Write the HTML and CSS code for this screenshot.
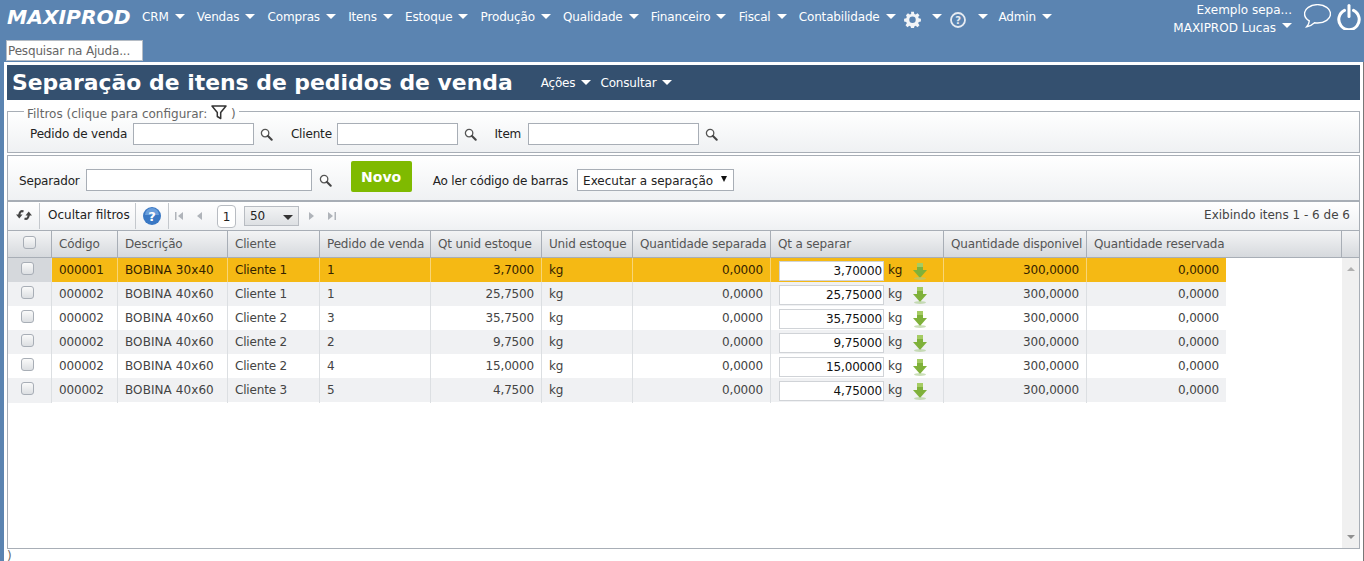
FILE: index.html
```html
<!DOCTYPE html>
<html lang="pt-BR">
<head>
<meta charset="utf-8">
<title>Separação de itens de pedidos de venda</title>
<link rel="stylesheet" href="styles.css">
</head>
<body>
<svg class="defs" width="0" height="0">
  <symbol id="lupa" viewBox="0 0 14 14"><circle cx="5.5" cy="5.5" r="4" fill="#fff" stroke="#555" stroke-width="1.4"/><path d="M8.6 8.6L12.6 12.6" stroke="#444" stroke-width="2.2" stroke-linecap="round"/></symbol>
  <symbol id="seta" viewBox="0 0 16 18"><path d="M5 1h6v7h4l-7 8-7-8h4z" fill="#7fb13a"/><path d="M5 1h6v4H5z" fill="#a5cc63"/><ellipse cx="8" cy="16.5" rx="6" ry="1.4" fill="#a9c98a" opacity=".6"/></symbol>
</svg>
<header class="topo">
  <div class="topo-linha">
    <span class="logo">MAXIPROD</span>
    <nav class="menu">
      <a class="mi">CRM<i class="car"></i></a>
      <a class="mi">Vendas<i class="car"></i></a>
      <a class="mi">Compras<i class="car"></i></a>
      <a class="mi">Itens<i class="car"></i></a>
      <a class="mi">Estoque<i class="car"></i></a>
      <a class="mi">Produção<i class="car"></i></a>
      <a class="mi">Qualidade<i class="car"></i></a>
      <a class="mi">Financeiro<i class="car"></i></a>
      <a class="mi">Fiscal<i class="car"></i></a>
      <a class="mi mi-cont">Contabilidade<i class="car"></i></a>
      <a class="mi mi-ic"><svg class="ic-gear" viewBox="0 0 18 18"><path d="M7.500.8h3l.4 2.300 1.500.6 1.900-1.400 2.100 2.100-1.400 1.900.6 1.500 2.300.4v3l-2.300.4-.6 1.500 1.400 1.900-2.100 2.100-1.900-1.400-1.500.6-.4 2.300h-3l-.4-2.300-1.500-.6-1.900 1.400-2.100-2.100 1.400-1.900-.6-1.500-2.300-.4v-3l2.300-.4.6-1.500L2.100 4.400l2.100-2.100 1.900 1.400 1.500-.6z" fill="#f2f4f7"/><circle cx="9" cy="9.300" r="3.400" fill="#5b84b1"/></svg><i class="car"></i></a>
      <a class="mi mi-aj"><svg class="ic-help" viewBox="0 0 16 16"><circle cx="8" cy="8" r="7" fill="none" stroke="#e6ebf2" stroke-width="1.800"/><text x="8" y="11.500" class="ic-help-t">?</text></svg><i class="car"></i></a>
      <a class="mi">Admin<i class="car"></i></a>
    </nav>
    <div class="usuario">
      <div class="usu-txt">
        <span>Exemplo sepa...</span>
        <span class="usu-nome">MAXIPROD Lucas<i class="car"></i></span>
      </div>
      <svg class="ic-chat" viewBox="1 1 25 22"><path d="M13.500 1.500C6.800 1.500 1.500 5.300 1.500 10c0 2.700 1.700 5 4.400 6.600-.2 2-1.200 4-2.400 5.400 3-.5 5.500-2 7.300-3.700.9.200 1.800.2 2.700.2 6.700 0 12-3.800 12-8.500S20.200 1.500 13.500 1.500z" fill="none" stroke="#fff" stroke-width="1.300"/></svg>
      <svg class="ic-power" viewBox="0 0 24 26"><path d="M7.500 6.300a10.200 10.200 0 1 0 9 0" fill="none" stroke="#fff" stroke-width="3" stroke-linecap="round"/><path d="M12 1.500v11" stroke="#fff" stroke-width="3" stroke-linecap="round"/></svg>
    </div>
  </div>
  <input class="ajuda" type="text" placeholder="Pesquisar na Ajuda...">
</header>
<main class="principal">
  <div class="titulo">
    <h1>Separação de itens de pedidos de venda</h1>
    <a class="tm">Ações<i class="car"></i></a>
    <a class="tm">Consultar<i class="car"></i></a>
  </div>
  <fieldset class="filtros">
    <legend>Filtros (clique para configurar: <svg class="ic-funil" viewBox="0 0 16 15"><path d="M1 1h14L9.700 7.500V13.500L6.300 11.500V7.500z" fill="none" stroke="#333" stroke-width="1.500" stroke-linejoin="round"/></svg> )</legend>
    <label class="rot">Pedido de venda</label><input class="campo c1" type="text"><svg class="lupa"><use href="#lupa"/></svg>
    <label class="rot r2">Cliente</label><input class="campo c2" type="text"><svg class="lupa"><use href="#lupa"/></svg>
    <label class="rot r3">Item</label><input class="campo c3" type="text"><svg class="lupa"><use href="#lupa"/></svg>
  </fieldset>
  <section class="form">
    <label class="rot rot-f">Separador</label><input class="campo c4" type="text"><svg class="lupa"><use href="#lupa"/></svg>
    <button class="novo" type="button">Novo</button>
    <label class="rot rot-f">Ao ler código de barras</label>
    <div class="sel"><span>Executar a separação</span><i class="car-p"></i></div>
  </section>
  <section class="grade">
    <div class="barra">
      <span class="b-cel b-ref"><svg class="ic-ref" viewBox="0 0 16 12"><path d="M7.500 2.500C5 1.500 3.500 3 3.300 6" fill="none" stroke="#444" stroke-width="2.200"/><path d="M0 5.500h6.500L3.300 9.500z" fill="#444"/><path d="M8.500 9.500c2.500 1 4-.5 4.200-3.500" fill="none" stroke="#444" stroke-width="2.200"/><path d="M9.500 6.500h6.500L12.700 2.500z" fill="#444"/></svg></span>
      <span class="b-cel b-oc">Ocultar filtros</span>
      <span class="b-cel b-aj"><svg class="ic-aj" viewBox="0 0 18 18"><circle cx="9" cy="9" r="9" fill="#3a78c4"/><path d="M2 8a7 7 0 0 1 14 0z" fill="#6a9edb"/><text x="9" y="13.500" class="ic-aj-t">?</text></svg></span>
      <span class="pg"><svg class="pa" viewBox="0 0 8 10"><path d="M0 1h1.500v8H0zM8 1v8L3 5z"/></svg></span>
      <span class="pg"><svg class="pa" viewBox="0 0 8 10"><path d="M7 1v8L2 5z"/></svg></span>
      <span class="pg-num">1</span>
      <span class="pg-sel">50<i class="car-d"></i></span>
      <span class="pg pg-d"><svg class="pa" viewBox="0 0 8 10"><path d="M1 1v8l5-4z"/></svg></span>
      <span class="pg"><svg class="pa" viewBox="0 0 8 10"><path d="M0 1v8l5-4zM6.500 1H8v8H6.500z"/></svg></span>
      <span class="exibindo">Exibindo itens 1 - 6 de 6</span>
    </div>
    <div class="cab">
      <div class="ch ch-chk"><i class="chk"></i></div>
      <div class="ch">Código</div>
      <div class="ch">Descrição</div>
      <div class="ch">Cliente</div>
      <div class="ch">Pedido de venda</div>
      <div class="ch">Qt unid estoque</div>
      <div class="ch">Unid estoque</div>
      <div class="ch">Quantidade separada</div>
      <div class="ch">Qt a separar</div>
      <div class="ch">Quantidade disponivel</div>
      <div class="ch ch-res">Quantidade reservada</div>
      <div class="ch ch-fim"></div>
    </div>
    <div class="corpo">
      <div class="linhas">
        <div class="lin sel-lin"><div class="td td-chk"><i class="chk"></i></div><div class="td">000001</div><div class="td">BOBINA 30x40</div><div class="td">Cliente 1</div><div class="td">1</div><div class="td dir">3,7000</div><div class="td">kg</div><div class="td dir">0,0000</div><div class="td td-qt"><input class="qt" value="3,70000"><span>kg</span><svg class="seta"><use href="#seta"/></svg></div><div class="td dir">300,0000</div><div class="td dir">0,0000</div></div>
        <div class="lin alt"><div class="td td-chk"><i class="chk"></i></div><div class="td">000002</div><div class="td">BOBINA 40x60</div><div class="td">Cliente 1</div><div class="td">1</div><div class="td dir">25,7500</div><div class="td">kg</div><div class="td dir">0,0000</div><div class="td td-qt"><input class="qt" value="25,75000"><span>kg</span><svg class="seta"><use href="#seta"/></svg></div><div class="td dir">300,0000</div><div class="td dir">0,0000</div></div>
        <div class="lin"><div class="td td-chk"><i class="chk"></i></div><div class="td">000002</div><div class="td">BOBINA 40x60</div><div class="td">Cliente 2</div><div class="td">3</div><div class="td dir">35,7500</div><div class="td">kg</div><div class="td dir">0,0000</div><div class="td td-qt"><input class="qt" value="35,75000"><span>kg</span><svg class="seta"><use href="#seta"/></svg></div><div class="td dir">300,0000</div><div class="td dir">0,0000</div></div>
        <div class="lin alt"><div class="td td-chk"><i class="chk"></i></div><div class="td">000002</div><div class="td">BOBINA 40x60</div><div class="td">Cliente 2</div><div class="td">2</div><div class="td dir">9,7500</div><div class="td">kg</div><div class="td dir">0,0000</div><div class="td td-qt"><input class="qt" value="9,75000"><span>kg</span><svg class="seta"><use href="#seta"/></svg></div><div class="td dir">300,0000</div><div class="td dir">0,0000</div></div>
        <div class="lin"><div class="td td-chk"><i class="chk"></i></div><div class="td">000002</div><div class="td">BOBINA 40x60</div><div class="td">Cliente 2</div><div class="td">4</div><div class="td dir">15,0000</div><div class="td">kg</div><div class="td dir">0,0000</div><div class="td td-qt"><input class="qt" value="15,00000"><span>kg</span><svg class="seta"><use href="#seta"/></svg></div><div class="td dir">300,0000</div><div class="td dir">0,0000</div></div>
        <div class="lin alt"><div class="td td-chk"><i class="chk"></i></div><div class="td">000002</div><div class="td">BOBINA 40x60</div><div class="td">Cliente 3</div><div class="td">5</div><div class="td dir">4,7500</div><div class="td">kg</div><div class="td dir">0,0000</div><div class="td td-qt"><input class="qt" value="4,75000"><span>kg</span><svg class="seta"><use href="#seta"/></svg></div><div class="td dir">300,0000</div><div class="td dir">0,0000</div></div>
      </div>
      <div class="rolagem"><i class="rl-c"></i><i class="rl-b"></i></div>
    </div>
  </section>
  <div class="resto">)</div>
</main>
</body>
</html>
```
FILE: styles.css
```css
* { box-sizing: border-box; }
html, body { height: 100%; }
body {
  margin: 0;
  height: 561px;
  overflow: hidden;
  background: #5b84b1;
  font-family: "DejaVu Sans", sans-serif;
  font-size: 12px;
  letter-spacing: -0.17px;
  color: #222;
}
.defs { display: block; height: 0; }
.topo { height: 62px; }
.topo-linha { display: flex; height: 40px; align-items: flex-start; padding-left: 7px; }
.logo {
  width: 135px;
  margin-top: 6px;
  font-weight: bold;
  font-style: italic;
  font-size: 20.3px;
  letter-spacing: 0;
  line-height: 23px;
  color: #fff;
}
.menu { display: flex; margin-top: 10px; color: #fff; line-height: 15px; }
.mi { display: flex; align-items: flex-start; margin-right: 12.25px; }
.mi-cont, .mi-ic { margin-right: 8px; }
.mi-aj { margin-right: 11px; }
.car {
  display: inline-block;
  width: 0;
  height: 0;
  margin: 4px 0 0 6px;
  border-left: 5px solid transparent;
  border-right: 5px solid transparent;
  border-top: 5px solid #fff;
}
.ic-gear { width: 17px; height: 17px; margin: 1px 5px 0 0; }
.ic-help { width: 16px; height: 16px; margin: 2px 6px 0 0; }
.ic-help-t { font: bold 10px "DejaVu Sans", sans-serif; fill: #e6ebf2; text-anchor: middle; }
.usuario { display: flex; margin-left: auto; padding-right: 3px; color: #fff; letter-spacing: 0; }
.usu-txt { display: flex; flex-direction: column; align-items: flex-end; margin-top: 1px; line-height: 18px; }
.usu-nome { display: flex; }
.ic-chat { width: 27px; height: 24px; margin: 4px 6px 0 12px; }
.ic-power { width: 24px; height: 26px; margin-top: 4px; }
.ajuda {
  display: block;
  width: 137px;
  height: 21px;
  margin-left: 6px;
  padding: 0 1px;
  border: 1px solid #b5bcc5;
  background: #fff;
  font: 12px "DejaVu Sans", sans-serif;
  letter-spacing: -0.17px;
}
.ajuda::placeholder { color: #666; opacity: 1; }
.principal {
  height: 499px;
  margin: 0 0 0 4px;
  padding: 3px 3px 0 3px;
  background: #fff;
  border-right: 1px solid #777;
}
.titulo {
  display: flex;
  align-items: center;
  height: 35px;
  padding-left: 5px;
  background: #34506f;
  color: #fff;
}
.titulo h1 {
  margin: 0 28px 0 0;
  font-size: 21.9px;
  font-weight: bold;
  letter-spacing: 0;
  line-height: 35px;
}
.tm { display: flex; margin-right: 9px; }
.filtros {
  display: block;
  height: 48px;
  margin: 5px 0 2px;
  padding: 5px 0 0 22px;
  border: 1px solid #a8aeb6;
  background: linear-gradient(#fff, #eff1f3);
  white-space: nowrap;
}
.filtros legend { margin-left: -6px; padding: 0 3px; color: #666; line-height: 13px; height: 13px; letter-spacing: 0; }
.ic-funil { width: 16px; height: 15px; vertical-align: -2px; }
.rot { color: #222; white-space: nowrap; }
.rot-f { padding-top: 2px; }
.campo {
  height: 22px;
  margin-left: 6px;
  padding: 0 2px;
  border: 1px solid #a8aeb6;
  background: #fff;
  vertical-align: middle;
}
.c1 { width: 121px; }
.c2 { width: 121px; margin-left: 5px; }
.c3 { width: 171px; margin-left: 7px; }
.c4 { width: 226px; }
.lupa { width: 13px; height: 13px; margin-left: 6px; vertical-align: middle; }
.r2 { margin-left: 14px; }
.r3 { margin-left: 14px; }
.form {
  display: flex;
  align-items: center;
  height: 45px;
  padding: 4px 0 0 11px;
  border: 1px solid #a8aeb6;
  border-bottom: 0;
  background: linear-gradient(#fff, #eff1f3);
}
.form .lupa { margin-left: 7px; }
.novo {
  width: 61px;
  height: 31px;
  margin: -7px 21px 0 19px;
  border: 0;
  border-radius: 2px;
  background: #7fba00;
  color: #fff;
  font: bold 14px "DejaVu Sans", sans-serif;
}
.sel {
  display: flex;
  align-items: center;
  justify-content: space-between;
  width: 157px;
  height: 22px;
  margin-left: 9px;
  padding: 1px 6px 0 5px;
  border: 1px solid #a8aeb6;
  background: #fff;
  letter-spacing: 0;
}
.car-p { width: 0; height: 0; margin-top: -3px; border-left: 3px solid transparent; border-right: 3px solid transparent; border-top: 6px solid #111; }
.grade { display: flex; flex-direction: column; height: 349px; border: 1px solid #a8aeb6; border-top: 2px solid #a8aeb6; }
.barra {
  display: flex;
  flex: none;
  align-items: center;
  height: 28px;
  background: linear-gradient(#fff, #eff1f3);
}
.b-cel { display: flex; align-items: center; height: 26px; border-right: 1px solid #c4c8cd; }
.b-ref { width: 32px; justify-content: center; padding-bottom: 2px; }
.ic-ref { width: 16px; height: 12px; }
.b-oc { width: 96px; padding-left: 8px; padding-bottom: 2px; white-space: nowrap; letter-spacing: 0; }
.b-aj { width: 33px; justify-content: center; margin-right: 6px; }
.ic-aj { width: 18px; height: 18px; }
.ic-aj-t { font: bold 13px "DejaVu Sans", sans-serif; fill: #fff; text-anchor: middle; }
.pg { display: flex; width: 20px; }
.pa { width: 8px; height: 10px; fill: #b0b4ba; }
.pg-num {
  width: 19px;
  height: 23px;
  margin: 1px 8px 0 2px;
  border: 1px solid #b8bcc2;
  border-radius: 4px;
  background: #fff;
  text-align: center;
  line-height: 23px;
}
.pg-sel {
  display: flex;
  align-items: center;
  justify-content: space-between;
  width: 55px;
  height: 20px;
  margin-right: 9px;
  padding: 0 5px;
  border: 1px solid #b8bcc2;
  background: linear-gradient(#f2f3f4, #dde0e3);
}
.car-d { width: 0; height: 0; margin-top: 3px; border-left: 5px solid transparent; border-right: 5px solid transparent; border-top: 5px solid #333; }
.exibindo { margin-left: auto; padding: 0 9px 2px 0; color: #444; letter-spacing: 0; }
.cab, .lin {
  display: grid;
  grid-template-columns: 44px 66px 110px 92px 111px 111px 91px 138px 173px 143px 139px;
}
.cab {
  flex: none;
  grid-template-columns: 44px 66px 110px 92px 111px 111px 91px 138px 173px 143px 255px 1fr;
  height: 28px;
  border-top: 1px solid #a8aeb6;
  border-bottom: 1px solid #a8aeb6;
  background: linear-gradient(#f3f4f5, #d6d9dd);
}
.ch { padding: 5px 0 0 7px; border-right: 1px solid #a8aeb6; color: #555; line-height: 17px; white-space: nowrap; overflow: hidden; }
.ch-fim { border-right: 0; }
.ch-chk { padding: 5px 0 0 15px; }
.chk { display: block; width: 13px; height: 13px; border: 1px solid #a8aeb6; border-radius: 3px; background: linear-gradient(#fafafa, #dcdfe2); }
.corpo { flex: 1; display: flex; justify-content: space-between; min-height: 0; background: #fff; }
.linhas { width: 1218px; }
.lin { height: 24px; color: #444; line-height: 25px; }
.alt { background: #f0f1f3; }
.sel-lin { background: #f5b914; color: #332200; }
.td { padding: 0 7px; border-right: 1px solid #dcdfe2; white-space: nowrap; }
.td:nth-child(3) { letter-spacing: 0.08px; }
.td:last-child { border-right: 0; }
.sel-lin .td { border-right-color: #f8d577; }
.dir { text-align: right; }
.td-chk { padding: 4px 0 0 13px; background: #f0f1f3; }
.sel-lin .td-chk { background: #d5d8dc; border-right-color: #dcdfe2; }
.lin:not(.alt):not(.sel-lin) .td-chk { background: #fff; }
.td-qt { display: flex; align-items: center; padding: 0 0 0 8px; color: inherit; }
.qt {
  width: 105px;
  height: 20px;
  padding: 0 1px 0 0;
  border: 1px solid #d0d3d7;
  background: #fff;
  color: #111;
  font: 12px "DejaVu Sans", sans-serif;
  letter-spacing: -0.17px;
  text-align: right;
}
.td-qt span { margin-left: 4px; }
.seta { width: 16px; height: 18px; margin: 1px 0 0 10px; }
.rolagem { display: flex; flex-direction: column; justify-content: space-between; width: 17px; padding: 9px 5px; background: #f0f0f0; }
.rl-c { width: 0; height: 0; border-left: 4px solid transparent; border-right: 4px solid transparent; border-bottom: 4px solid #b0b0b0; }
.rl-b { width: 0; height: 0; border-left: 4px solid transparent; border-right: 4px solid transparent; border-top: 4px solid #909090; }
.resto { padding-top: 1px; color: #666; line-height: 12px; }
```
